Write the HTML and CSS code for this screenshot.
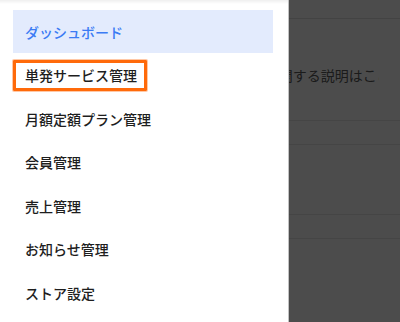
FILE: index.html
```html
<!DOCTYPE html>
<html lang="ja">
<head>
<meta charset="utf-8">
<title>管理画面</title>
<link rel="stylesheet" href="styles.css">
</head>
<body>
<div class="page">
  <header class="page-header"></header>
  <div class="page-desc-wrap"><p class="page-desc">このページに関する説明はここに表示されます</p></div>
  <div class="page-row"></div>
  <div class="page-block"></div>
  <div class="page-row"></div>
</div>
<div class="overlay"></div>
<nav class="drawer">
  <ul class="menu">
    <li class="menu-item is-active"><a class="menu-link" href="#">ダッシュボード</a></li>
    <li class="menu-item"><a class="menu-link is-focused" href="#">単発サービス管理</a></li>
    <li class="menu-item"><a class="menu-link" href="#">月額定額プラン管理</a></li>
    <li class="menu-item"><a class="menu-link" href="#">会員管理</a></li>
    <li class="menu-item"><a class="menu-link" href="#">売上管理</a></li>
    <li class="menu-item"><a class="menu-link" href="#">お知らせ管理</a></li>
    <li class="menu-item"><a class="menu-link" href="#">ストア設定</a></li>
  </ul>
</nav>
</body>
</html>
```

FILE: styles.css
```css
* { box-sizing: border-box; }
html, body { margin: 0; padding: 0; }
body {
  font-family: "Noto Sans CJK JP", "Noto Sans", sans-serif;
  font-size: 14px;
  color: #212121;
  background: #fff;
  width: 400px;
  height: 322px;
  overflow: hidden;
}

/* underlying page */
.page-header {
  height: 19px;
  border-bottom: 1px solid #e2e2e2;
}
.page-desc-wrap {
  width: 379px;
  overflow: hidden;
}
.page-desc {
  margin: 0;
  padding: 46px 0 0 195px;
  line-height: 20px;
  white-space: nowrap;
  color: #5a5a5a;
}
.page-row {
  height: 25px;
  margin-top: 35px;
  border-top: 1px solid #e8e8e8;
  border-bottom: 1px solid #e8e8e8;
}
.page-block { height: 69px; }
.page-row + .page-block + .page-row { margin-top: 0; }

.overlay {
  position: fixed;
  inset: 0;
  background: rgba(0, 0, 0, 0.7);
}

/* drawer */
.drawer {
  position: fixed;
  top: 0;
  left: 0;
  bottom: 0;
  width: 289px;
  background: linear-gradient(#efefef, #fff 4px);
  border-right: 1px solid #c2c2c2;
}
.menu {
  list-style: none;
  margin: 0;
  padding: 10px 15px 0 13px;
}
.menu-item {
  height: 43.5px;
  display: flex;
  align-items: center;
}
.menu-link {
  display: inline-block;
  padding: 0 12px;
  line-height: 20px;
  font-weight: 500;
  color: #1e1e1e;
  text-decoration: none;
  white-space: nowrap;
}
.menu-item.is-active {
  background: #e3ebfd;
  height: 43px;
  margin-bottom: 0.5px;
}
.menu-item.is-active .menu-link {
  color: #3b7bf4;
}
.menu-link.is-focused {
  padding: 3px 7px 3px 9px;
  border: 3px solid #ff6a0a;
  box-shadow: 0 0 0 1px #ffc8a6;
  border-radius: 1px;
  line-height: 19px;
}
```
